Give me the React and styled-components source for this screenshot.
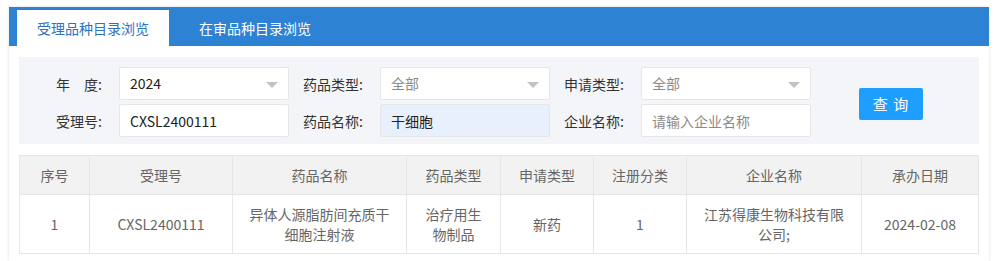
import React from 'react'
import styled, { createGlobalStyle } from "styled-components"

const GlobalStyle = createGlobalStyle`
    body {
        margin: 0;
        background: #fff;
        font-family: "Noto Sans CJK SC", "Noto Sans", sans-serif;
        font-size: 14px;
        color: #333;
    }
`;

const columns = [
    { title: '序号', width: 70 },
    { title: '受理号', width: 143 },
    { title: '药品名称', width: 174 },
    { title: '药品类型', width: 94 },
    { title: '申请类型', width: 93 },
    { title: '注册分类', width: 93 },
    { title: '企业名称', width: 175 },
    { title: '承办日期', width: 117 },
];

const rows = [
    ['1', 'CXSL2400111', '异体人源脂肪间充质干细胞注射液', '治疗用生物制品', '新药', '1', '江苏得康生物科技有限公司;', '2024-02-08'],
];

const App = () => {
    return (
        <>
            <GlobalStyle />
            <Container>
                <TabBar>
                    <Tab active>受理品种目录浏览</Tab>
                    <Tab>在审品种目录浏览</Tab>
                </TabBar>
                <Body>
                    <FilterPanel>
                        <Fields>
                            <Field>
                                <Label>年&#12288;度:</Label>
                                <Select>2024</Select>
                            </Field>
                            <Field>
                                <Label>药品类型:</Label>
                                <Select placeholder>全部</Select>
                            </Field>
                            <Field>
                                <Label>申请类型:</Label>
                                <Select placeholder>全部</Select>
                            </Field>
                            <Field>
                                <Label>受理号:</Label>
                                <Input defaultValue="CXSL2400111" />
                            </Field>
                            <Field>
                                <Label>药品名称:</Label>
                                <Input defaultValue="干细胞" autofilled />
                            </Field>
                            <Field>
                                <Label>企业名称:</Label>
                                <Input placeholder="请输入企业名称" />
                            </Field>
                        </Fields>
                        <SearchButton>查 询</SearchButton>
                    </FilterPanel>
                    <Table>
                        <colgroup>
                            {columns.map(c => <col key={c.title} style={{ width: c.width }} />)}
                        </colgroup>
                        <thead>
                            <tr>
                                {columns.map(c => <Th key={c.title}>{c.title}</Th>)}
                            </tr>
                        </thead>
                        <tbody>
                            {rows.map((r, i) => (
                                <tr key={i}>
                                    {r.map((cell, j) => <Td key={j}>{cell}</Td>)}
                                </tr>
                            ))}
                        </tbody>
                    </Table>
                </Body>
            </Container>
        </>
    )
}

const Container = styled.div`
    margin: 7px 0 0 9px;
    width: 980px;
    height: 254px;
    background: #fff;
    box-shadow: 0 0 3px rgba(0, 0, 0, 0.14);
`;

const TabBar = styled.div`
    display: flex;
    align-items: flex-end;
    gap: 10px;
    height: 39px;
    padding-left: 8px;
    background: #2d82d4;
`;

const Tab = styled.div`
    height: 36px;
    line-height: 36px;
    padding: 0 20px;
    font-size: 14px;
    color: ${p => p.active ? '#2e72c2' : '#fff'};
    background: ${p => p.active ? '#fff' : 'transparent'};
    width: ${p => p.active ? '112px' : 'auto'};
`;

const Body = styled.div`
    padding: 11px 10px 0 10px;
`;

const FilterPanel = styled.div`
    display: flex;
    align-items: center;
    background: #f4f5f9;
    padding: 10px 0 7px 20px;
`;

const Fields = styled.div`
    display: grid;
    grid-template-columns: repeat(3, 250px);
    column-gap: 11px;
    row-gap: 4px;
`;

const Field = styled.div`
    display: flex;
    align-items: center;
`;

const Label = styled.label`
    width: 80px;
    padding-right: 17px;
    box-sizing: border-box;
    text-align: right;
    color: #333;
    font-size: 14px;
    white-space: nowrap;
`;

const Select = styled.div`
    position: relative;
    box-sizing: border-box;
    width: 170px;
    height: 33px;
    line-height: 31px;
    padding-left: 10px;
    border: 1px solid #e6e6e6;
    border-radius: 2px;
    background: #fff;
    color: ${p => p.placeholder ? '#8a8a8a' : '#222'};
    &::after {
        content: '';
        position: absolute;
        right: 10px;
        top: 14px;
        border: 6px solid transparent;
        border-top-color: #c2c2c2;
        border-bottom-width: 0;
    }
`;

const Input = styled.input`
    box-sizing: border-box;
    width: 170px;
    height: 33px;
    padding: 0 0 0 10px;
    border: 1px solid #e6e6e6;
    border-radius: 2px;
    outline: none;
    font-family: inherit;
    font-size: 14px;
    color: #222;
    background: ${p => p.autofilled ? '#e8f0fe' : '#fff'};
    &::placeholder {
        color: #8a8a8a;
    }
`;

const SearchButton = styled.button`
    margin-left: 48px;
    margin-top: 3px;
    width: 64px;
    height: 32px;
    border: none;
    border-radius: 2px;
    background: #1e9fff;
    color: #fff;
    font-family: inherit;
    font-size: 15px;
    letter-spacing: 1px;
    cursor: pointer;
`;

const Table = styled.table`
    margin-top: 11px;
    width: 959px;
    border-collapse: collapse;
    table-layout: fixed;
    color: #666;
    font-size: 14px;
`;

const Th = styled.th`
    height: 38px;
    padding: 0 15px;
    background: #f2f2f2;
    border: 1px solid #e6e6e6;
    font-weight: normal;
    text-align: center;
    line-height: 20px;
`;

const Td = styled.td`
    padding: 9px 15px;
    border: 1px solid #e6e6e6;
    text-align: center;
    line-height: 20px;
    word-break: break-all;
`;

export default App
